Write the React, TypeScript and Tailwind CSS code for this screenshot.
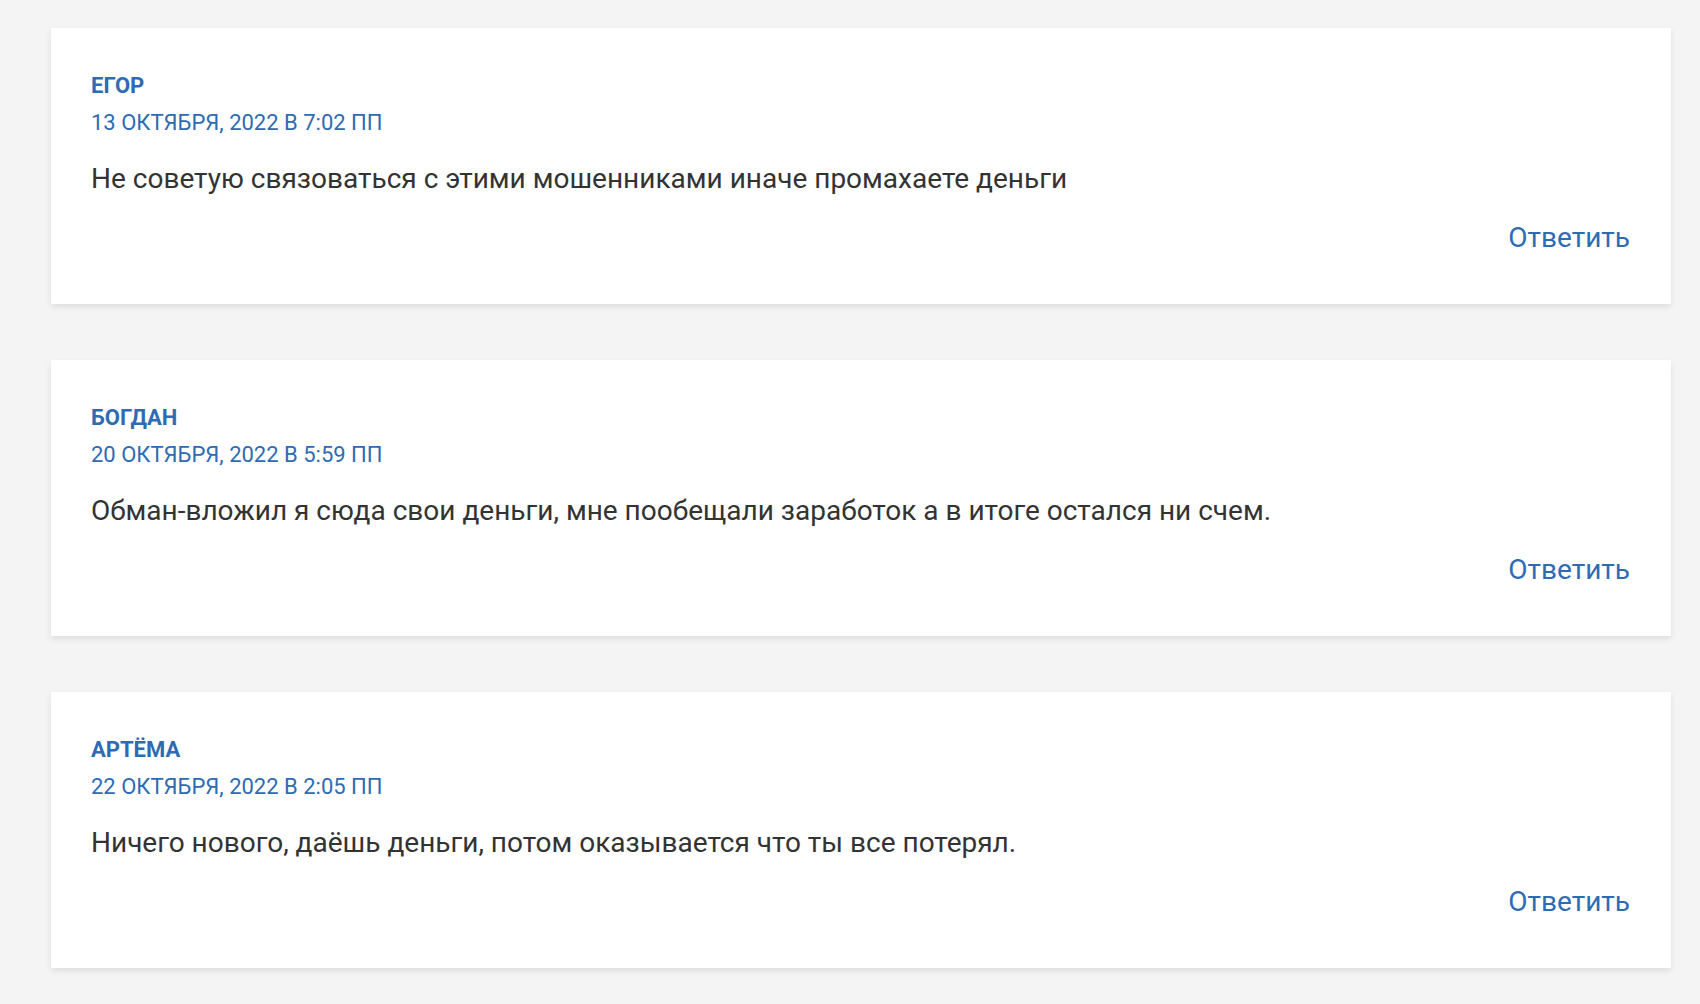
const COMMENTS = [
  {
    author: 'Егор',
    date: '13 октября, 2022 в 7:02 пп',
    text: 'Не советую связоваться с этими мошенниками иначе промахаете деньги',
  },
  {
    author: 'Богдан',
    date: '20 октября, 2022 в 5:59 пп',
    text: 'Обман-вложил я сюда свои деньги, мне пообещали заработок а в итоге остался ни счем.',
  },
  {
    author: 'Артёма',
    date: '22 октября, 2022 в 2:05 пп',
    text: 'Ничего нового, даёшь деньги, потом оказывается что ты все потерял.',
  },
];

export default function App() {
  return (
    <div
      className="min-h-screen bg-[#f4f4f4] pl-[51px] pr-[29px] pt-[28px] pb-10"
      style={{ fontFamily: 'Roboto, "Noto Sans", sans-serif' }}
    >
      <div className="flex flex-col gap-[56px]">
        {COMMENTS.map((c) => (
          <article
            key={c.author}
            className="flex h-[276px] flex-col bg-white pl-10 pr-[41px] pt-[46px] shadow-[0_3px_6px_rgba(0,0,0,0.09)]"
          >
            <div className="text-[22px] font-bold uppercase leading-6 text-[#2e6bb3]">{c.author}</div>
            <div className="mt-[11px] text-[22px] uppercase leading-7 text-[#2e6bb3]">{c.date}</div>
            <p className="mt-[26px] text-[28px] leading-8 text-[#333333]">{c.text}</p>
            <div className="mt-[25px] flex justify-end">
              <a href="#" className="text-[28px] leading-9 text-[#2e6bb3]">
                Ответить
              </a>
            </div>
          </article>
        ))}
      </div>
    </div>
  );
}
